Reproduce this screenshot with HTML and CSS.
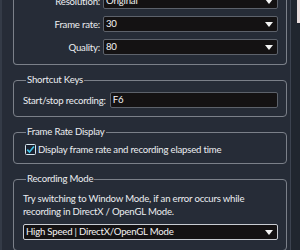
FILE: index.html
```html
<!DOCTYPE html>
<html lang="en">
<head>
  <meta charset="UTF-8">
  <title>Recording Settings</title>
  <link rel="stylesheet" href="styles.css">
</head>
<body>
  <div class="edge"></div>

  <div class="panel">
    <!-- Video options (scrolled, top cut off) -->
    <fieldset class="group video">
      <div class="form-grid">
        <label>Resolution:</label>
        <div class="select">Original<span class="arrow"></span></div>

        <label>Frame rate:</label>
        <div class="select">30<span class="arrow"></span></div>

        <label>Quality:</label>
        <div class="select">80<span class="arrow"></span></div>
      </div>
    </fieldset>

    <!-- Shortcut keys -->
    <fieldset class="group">
      <legend>Shortcut Keys</legend>
      <div class="key-row">
        <label>Start/stop recording:</label>
        <div class="textbox">F6</div>
      </div>
    </fieldset>

    <!-- Frame rate display -->
    <fieldset class="group">
      <legend>Frame Rate Display</legend>
      <div class="check-row">
        <span class="checkbox">
          <svg width="11" height="11" viewBox="0 0 11 11">
            <rect x="0.5" y="0.5" width="10" height="10" rx="1" fill="#1b2230" stroke="#d7e6ef"/>
            <path d="M2.3 5.6 L4.5 8 L8.9 2.4" fill="none" stroke="#3fc3e8" stroke-width="1.6"/>
          </svg>
        </span>
        <span>Display frame rate and recording elapsed time</span>
      </div>
    </fieldset>

    <!-- Recording mode -->
    <fieldset class="group">
      <legend>Recording Mode</legend>
      <p class="hint">Try switching to Window Mode, if an error occurs while<br>recording in DirectX / OpenGL Mode.</p>
      <div class="select focused">High Speed | DirectX/OpenGL Mode<span class="arrow"></span></div>
    </fieldset>
  </div>

  <div class="scrollbar">
    <div class="thumb"></div>
  </div>
</body>
</html>
```

FILE: styles.css
```css
html, body {
  margin: 0;
  height: 100%;
}
body {
  display: flex;
  background: #262c37;
  color: #eceef1;
  font-family: Lato, "Noto Sans", sans-serif;
  font-size: 9.6px;
  letter-spacing: -0.2px;
  overflow: hidden;
}
.edge {
  width: 2px;
  background: #343b47;
}
.panel {
  width: 274px;
  padding: 0 3px 0 11px;
  display: flex;
  flex-direction: column;
  gap: 8px;
}
.group {
  margin: 0;
  border: 1px solid #7b8089;
  border-radius: 4px;
  padding: 0 8px 8px 9px;
  min-width: 0;
}
.group legend {
  padding: 0 1px;
  margin-left: 3px;
  line-height: 14px;
}
.video {
  margin-top: -7px;
  border-top: none;
  border-top-left-radius: 0;
  border-top-right-radius: 0;
  padding-bottom: 9px;
}
.form-grid {
  display: grid;
  grid-template-columns: 77px 1fr;
  column-gap: 3px;
  row-gap: 7px;
  align-items: center;
}
.form-grid label {
  text-align: right;
}
.select, .textbox {
  position: relative;
  height: 14px;
  line-height: 14px;
  padding: 0 2px;
  background: #141213;
  border: 1px solid #5d626b;
  border-radius: 2px;
  color: #f4f4f4;
  white-space: nowrap;
}
.select.focused {
  border-color: #c9ccd2;
}
.arrow {
  position: absolute;
  right: 4px;
  top: 5px;
  width: 0;
  height: 0;
  border-left: 4px solid transparent;
  border-right: 4px solid transparent;
  border-top: 5px solid #f4f4f4;
}
.key-row {
  display: flex;
  align-items: center;
  gap: 4px;
  margin-top: 5px;
}
.key-row .textbox {
  flex: 1;
}
.check-row {
  display: flex;
  align-items: center;
  gap: 2px;
  margin-top: 5px;
  padding-left: 2px;
}
.checkbox svg {
  display: block;
}
.hint {
  margin: 6px 0 6px;
  line-height: 13px;
}
.group:last-child {
  padding-bottom: 10px;
}
.scrollbar {
  flex: 1;
  border-left: 1px solid #3c4350;
  background: #20262f;
  display: flex;
  justify-content: flex-end;
}
.thumb {
  width: 3px;
  height: 23px;
  background: #eadede;
}
```
